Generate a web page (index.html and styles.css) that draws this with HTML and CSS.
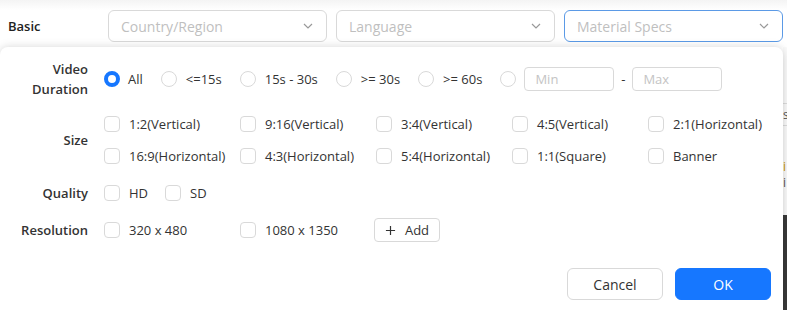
FILE: index.html
```html
<!DOCTYPE html>
<html lang="en">
<head>
	<meta charset="UTF-8">
	<meta name="viewport" content="width=device-width, initial-scale=1.0">
	<title>Material Filter</title>
	<link rel="stylesheet" href="styles.css">
</head>
<body>
	<div class="topbar">
		<div class="top-label">Basic</div>
		<div class="select"><span>Country/Region</span><svg class="chev" viewBox="0 0 12 12"><path d="M2 4 L6 8 L10 4" /></svg></div>
		<div class="select"><span>Language</span><svg class="chev" viewBox="0 0 12 12"><path d="M2 4 L6 8 L10 4" /></svg></div>
		<div class="select focused"><span>Material Specs</span><svg class="chev" viewBox="0 0 12 12"><path d="M2 4 L6 8 L10 4" /></svg></div>
	</div>

	<div class="page">
		<div class="panel">
			<div class="row row-duration">
				<div class="label">Video<br>Duration</div>
				<div class="options">
					<label class="radio checked"><span class="dot"></span>All</label>
					<label class="radio"><span class="dot"></span>&lt;=15s</label>
					<label class="radio"><span class="dot"></span>15s - 30s</label>
					<label class="radio"><span class="dot"></span>&gt;= 30s</label>
					<label class="radio"><span class="dot"></span>&gt;= 60s</label>
					<label class="radio range"><span class="dot"></span>
						<span class="input">Min</span>
						<span class="dash">-</span>
						<span class="input">Max</span>
					</label>
				</div>
			</div>

			<div class="row row-size">
				<div class="label">Size</div>
				<div class="grid">
					<label class="check"><span class="box"></span>1:2(Vertical)</label>
					<label class="check"><span class="box"></span>9:16(Vertical)</label>
					<label class="check"><span class="box"></span>3:4(Vertical)</label>
					<label class="check"><span class="box"></span>4:5(Vertical)</label>
					<label class="check"><span class="box"></span>2:1(Horizontal)</label>
					<label class="check"><span class="box"></span>16:9(Horizontal)</label>
					<label class="check"><span class="box"></span>4:3(Horizontal)</label>
					<label class="check"><span class="box"></span>5:4(Horizontal)</label>
					<label class="check"><span class="box"></span>1:1(Square)</label>
					<label class="check"><span class="box"></span>Banner</label>
				</div>
			</div>

			<div class="row row-quality">
				<div class="label">Quality</div>
				<div class="options">
					<label class="check quality"><span class="box"></span>HD</label>
					<label class="check quality"><span class="box"></span>SD</label>
				</div>
			</div>

			<div class="row row-resolution">
				<div class="label">Resolution</div>
				<div class="options">
					<label class="check res"><span class="box"></span>320 x 480</label>
					<label class="check res"><span class="box"></span>1080 x 1350</label>
					<button class="add"><svg viewBox="0 0 12 12"><path d="M6 1 V11 M1 6 H11" /></svg>Add</button>
				</div>
			</div>

			<div class="footer">
				<button class="btn">Cancel</button>
				<button class="btn primary">OK</button>
			</div>
		</div>

		<div class="behind">
			<div class="b-line l1"></div>
			<div class="b-text t1">s</div>
			<div class="b-line l2"></div>
			<div class="b-text t2">i</div>
			<div class="b-text t3">i</div>
			<div class="b-dark"></div>
		</div>
	</div>
</body>
</html>
```

FILE: styles.css
```css
* {
	box-sizing: border-box;
}
body {
	margin: 0;
	font-family: "Open Sans", "Noto Sans", Arial, sans-serif;
	font-size: 13px;
	color: #333;
	background: #fff;
	overflow: hidden;
}
.topbar {
	height: 47px;
	display: flex;
	align-items: center;
	gap: 9px;
	padding: 5px 4px 0 8px;
	background: linear-gradient(#f4f4f4, #fff 10px);
}
.top-label {
	width: 91px;
	font-weight: 600;
	color: #222;
}
.select {
	width: 219px;
	height: 32px;
	border: 1px solid #d9d9d9;
	border-radius: 6px;
	display: flex;
	align-items: center;
	justify-content: space-between;
	padding: 0 12px;
	color: #bfbfbf;
	font-size: 14px;
	background: #fff;
}
.select.focused {
	border-color: #5b9ae6;
}
.chev {
	width: 12px;
	height: 12px;
	fill: none;
	stroke: #999;
	stroke-width: 1.2;
}
.page {
	display: flex;
	height: 263px;
}
.panel {
	width: 783px;
	flex-shrink: 0;
	background: #fff;
	border-radius: 8px 8px 0 0;
	box-shadow: 0 -2px 8px rgba(0, 0, 0, 0.08), 0 3px 8px rgba(0, 0, 0, 0.12);
	padding: 12px 12px 0 0;
	position: relative;
	z-index: 1;
}
.row {
	display: flex;
	align-items: center;
	margin-bottom: 13px;
}
.label {
	width: 88px;
	flex-shrink: 0;
	margin-right: 16px;
	text-align: right;
	font-weight: 600;
	color: #333;
	line-height: 20px;
}
.row-duration {
	height: 40px;
}
.options {
	display: flex;
	align-items: center;
}
.radio {
	display: flex;
	align-items: center;
	margin-right: 18px;
	white-space: nowrap;
}
.dot {
	width: 16px;
	height: 16px;
	border: 1px solid #d9d9d9;
	border-radius: 50%;
	margin-right: 9px;
	background: #fff;
}
.radio.checked .dot {
	border: 4px solid #1677ff;
	margin-right: 8px;
}
.range .dot {
	margin-right: 8px;
}
.input {
	width: 90px;
	height: 24px;
	border: 1px solid #d9d9d9;
	border-radius: 4px;
	padding: 0 10px;
	line-height: 22px;
	color: #c4c4c4;
}
.dash {
	width: 18px;
	text-align: center;
}
.grid {
	display: grid;
	grid-template-columns: repeat(4, 136px) auto;
	row-gap: 8px;
}
.check {
	display: flex;
	align-items: center;
	height: 24px;
	white-space: nowrap;
}
.box {
	width: 16px;
	height: 16px;
	border: 1px solid #d9d9d9;
	border-radius: 4px;
	margin-right: 9px;
	background: #fff;
}
.quality {
	margin-right: 17px;
}
.res {
	width: 136px;
}
.add {
	height: 24px;
	width: 66px;
	margin-left: -2px;
	border: 1px solid #d9d9d9;
	border-radius: 4px;
	background: #fff;
	font: inherit;
	color: #333;
	display: flex;
	align-items: center;
	justify-content: center;
	gap: 9px;
	padding: 0;
}
.add svg {
	width: 11px;
	height: 11px;
	fill: none;
	stroke: #333;
	stroke-width: 1.3;
}
.footer {
	display: flex;
	justify-content: flex-end;
	gap: 12px;
	margin-top: 26px;
}
.btn {
	width: 96px;
	height: 32px;
	border: 1px solid #d9d9d9;
	border-radius: 6px;
	background: #fff;
	font: inherit;
	font-size: 14px;
	color: #333;
}
.btn.primary {
	background: #1677ff;
	border-color: #1677ff;
	color: #fff;
}
.behind {
	flex: 1;
	position: relative;
	background: #fafafa;
}
.b-line {
	position: absolute;
	left: 0;
	right: 0;
	height: 1px;
	background: #ddd;
}
.l1 { top: 56px; }
.l2 { top: 78px; }
.b-text {
	position: absolute;
	left: 0;
	font-size: 12px;
	line-height: 12px;
	color: #555;
}
.t1 { top: 62px; }
.t2 { top: 114px; color: #c90; }
.t3 { top: 130px; }
.b-dark {
	position: absolute;
	top: 168px;
	left: 0;
	right: 0;
	bottom: 0;
	background: #3a3a3a;
}
```
